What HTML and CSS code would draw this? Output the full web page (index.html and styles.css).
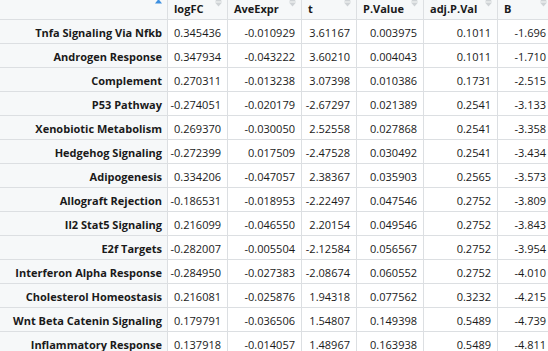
FILE: index.html
```html
<!DOCTYPE html>
<html>
<head>
<meta charset="utf-8">
<link rel="stylesheet" href="styles.css">
</head>
<body>
<div class="grid">
  <div class="hd rn"><span class="hl"></span><svg class="sort" width="7" height="8" viewBox="0 0 7 8"><polygon points="0,3.5 3.5,-1 7,3.5" fill="#3d8fe0"/></svg></div>
  <div class="hd"><span class="hl">logFC</span><svg class="sort" width="7" height="8" viewBox="0 0 7 8"><polygon points="0,1.5 3.5,-3 7,1.5" fill="#cfd3d6"/><polygon points="0,2.5 7,2.5 3.5,6.5" fill="#cfd3d6"/></svg></div>
  <div class="hd"><span class="hl">AveExpr</span><svg class="sort" width="7" height="8" viewBox="0 0 7 8"><polygon points="0,1.5 3.5,-3 7,1.5" fill="#cfd3d6"/><polygon points="0,2.5 7,2.5 3.5,6.5" fill="#cfd3d6"/></svg></div>
  <div class="hd"><span class="hl">t</span><svg class="sort" width="7" height="8" viewBox="0 0 7 8"><polygon points="0,1.5 3.5,-3 7,1.5" fill="#cfd3d6"/><polygon points="0,2.5 7,2.5 3.5,6.5" fill="#cfd3d6"/></svg></div>
  <div class="hd"><span class="hl">P.Value</span><svg class="sort" width="7" height="8" viewBox="0 0 7 8"><polygon points="0,1.5 3.5,-3 7,1.5" fill="#cfd3d6"/><polygon points="0,2.5 7,2.5 3.5,6.5" fill="#cfd3d6"/></svg></div>
  <div class="hd"><span class="hl">adj.P.Val</span><svg class="sort" width="7" height="8" viewBox="0 0 7 8"><polygon points="0,1.5 3.5,-3 7,1.5" fill="#cfd3d6"/><polygon points="0,2.5 7,2.5 3.5,6.5" fill="#cfd3d6"/></svg></div>
  <div class="hd"><span class="hl">B</span><svg class="sort" width="7" height="8" viewBox="0 0 7 8"><polygon points="0,1.5 3.5,-3 7,1.5" fill="#cfd3d6"/><polygon points="0,2.5 7,2.5 3.5,6.5" fill="#cfd3d6"/></svg></div>

  <div class="c rn">Tnfa Signaling Via Nfkb</div><div class="c">0.345436</div><div class="c">-0.010929</div><div class="c">3.61167</div><div class="c">0.003975</div><div class="c">0.1011</div><div class="c">-1.696</div>
  <div class="c rn">Androgen Response</div><div class="c">0.347934</div><div class="c">-0.043222</div><div class="c">3.60210</div><div class="c">0.004043</div><div class="c">0.1011</div><div class="c">-1.710</div>
  <div class="c rn">Complement</div><div class="c">0.270311</div><div class="c">-0.013238</div><div class="c">3.07398</div><div class="c">0.010386</div><div class="c">0.1731</div><div class="c">-2.515</div>
  <div class="c rn">P53 Pathway</div><div class="c">-0.274051</div><div class="c">-0.020179</div><div class="c">-2.67297</div><div class="c">0.021389</div><div class="c">0.2541</div><div class="c">-3.133</div>
  <div class="c rn">Xenobiotic Metabolism</div><div class="c">0.269370</div><div class="c">-0.030050</div><div class="c">2.52558</div><div class="c">0.027868</div><div class="c">0.2541</div><div class="c">-3.358</div>
  <div class="c rn">Hedgehog Signaling</div><div class="c">-0.272399</div><div class="c">0.017509</div><div class="c">-2.47528</div><div class="c">0.030492</div><div class="c">0.2541</div><div class="c">-3.434</div>
  <div class="c rn">Adipogenesis</div><div class="c">0.334206</div><div class="c">-0.047057</div><div class="c">2.38367</div><div class="c">0.035903</div><div class="c">0.2565</div><div class="c">-3.573</div>
  <div class="c rn">Allograft Rejection</div><div class="c">-0.186531</div><div class="c">-0.018953</div><div class="c">-2.22497</div><div class="c">0.047546</div><div class="c">0.2752</div><div class="c">-3.809</div>
  <div class="c rn">Il2 Stat5 Signaling</div><div class="c">0.216099</div><div class="c">-0.046550</div><div class="c">2.20154</div><div class="c">0.049546</div><div class="c">0.2752</div><div class="c">-3.843</div>
  <div class="c rn">E2f Targets</div><div class="c">-0.282007</div><div class="c">-0.005504</div><div class="c">-2.12584</div><div class="c">0.056567</div><div class="c">0.2752</div><div class="c">-3.954</div>
  <div class="c rn">Interferon Alpha Response</div><div class="c">-0.284950</div><div class="c">-0.027383</div><div class="c">-2.08674</div><div class="c">0.060552</div><div class="c">0.2752</div><div class="c">-4.010</div>
  <div class="c rn">Cholesterol Homeostasis</div><div class="c">0.216081</div><div class="c">-0.025876</div><div class="c">1.94318</div><div class="c">0.077562</div><div class="c">0.3232</div><div class="c">-4.215</div>
  <div class="c rn">Wnt Beta Catenin Signaling</div><div class="c">0.179791</div><div class="c">-0.036506</div><div class="c">1.54807</div><div class="c">0.149398</div><div class="c">0.5489</div><div class="c">-4.739</div>
  <div class="c rn">Inflammatory Response</div><div class="c">0.137918</div><div class="c">-0.014057</div><div class="c">1.48967</div><div class="c">0.163938</div><div class="c">0.5489</div><div class="c">-4.811</div>
</div>
</body>
</html>
```
FILE: styles.css
```css
html, body {
  margin: 0;
  padding: 0;
  background: #ffffff;
  overflow: hidden;
}
.grid {
  display: grid;
  grid-template-columns: 168px 60px 74px 55px 67px 74px 55px;
  grid-template-rows: 20px repeat(14, 24px);
  width: 553px;
  font-family: "Open Sans", "Noto Sans", sans-serif;
  font-size: 11px;
  color: #1a1a1a;
}
.hd, .c {
  box-sizing: border-box;
  border-right: 1px solid #dcdfe2;
  border-bottom: 1px solid #dcdfe2;
  overflow: hidden;
  white-space: nowrap;
}
.hd {
  display: flex;
  justify-content: space-between;
  align-items: flex-start;
  background: #f6f8f9;
  font-weight: bold;
  padding: 0 5px 0 6px;
}
.hl {
  line-height: 17px;
}
.sort {
  flex: none;
  display: block;
}
.c {
  display: flex;
  align-items: center;
  justify-content: flex-end;
  padding: 1px 6px 0;
}
.c.rn {
  background: #f6f8f9;
  font-weight: bold;
  padding-right: 5px;
}
```
